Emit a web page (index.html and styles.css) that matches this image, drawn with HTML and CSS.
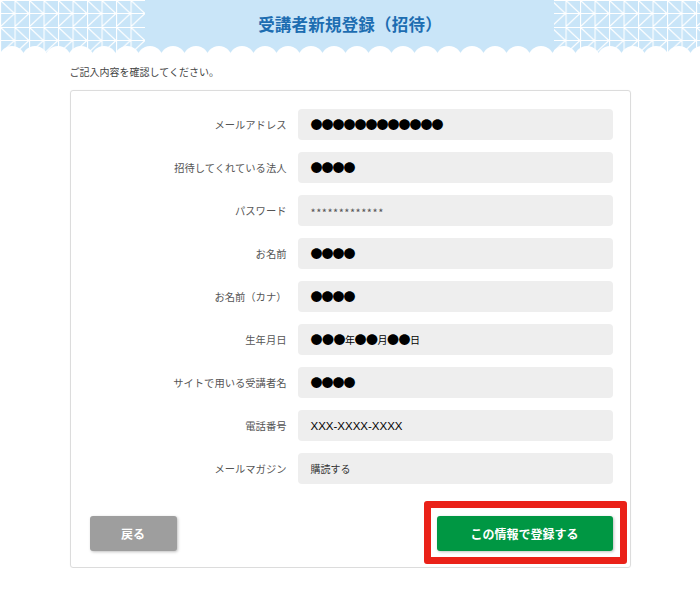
FILE: index.html
```html
<!doctype html>
<html lang="ja">
<head>
<meta charset="utf-8">
<title>受講者新規登録（招待）</title>
<link rel="stylesheet" href="styles.css">
</head>
<body>
<header class="pageHead">
	<svg class="headBg" width="700" height="56" viewBox="0 0 700 56" aria-hidden="true">
		<defs>
			<pattern id="tri" width="14.5" height="27" patternUnits="userSpaceOnUse">
				<path d="M0.5 0V27M0 0.5H14.5M0 13.5H14.5M0 0L14.5 13.5L0 27" stroke="#fff" stroke-width="1.2" fill="none"/>
			</pattern>
			<pattern id="wave" x="-11" width="23" height="56" patternUnits="userSpaceOnUse">
				<circle cx="23" cy="59" r="13" fill="#fff"/>
				<circle cx="0" cy="59" r="13" fill="#fff"/>
			</pattern>
		</defs>
		<rect width="700" height="56" fill="#c9e5f8"/>
		<rect x="0" y="0" width="145" height="56" fill="url(#tri)"/>
		<rect x="554" y="0" width="146" height="56" fill="url(#tri)"/>
		<rect width="700" height="56" fill="url(#wave)"/>
	</svg>
	<h1 class="pageTitle">受講者新規登録（招待）</h1>
</header>

<main class="content">
	<p class="lead">ご記入内容を確認してください。</p>

	<div class="card">
		<div class="row">
			<div class="label">メールアドレス</div>
			<div class="value dots">●●●●●●●●●●●●</div>
		</div>
		<div class="row">
			<div class="label">招待してくれている法人</div>
			<div class="value dots">●●●●</div>
		</div>
		<div class="row">
			<div class="label">パスワード</div>
			<div class="value pass">*************</div>
		</div>
		<div class="row">
			<div class="label">お名前</div>
			<div class="value dots">●●●●</div>
		</div>
		<div class="row">
			<div class="label">お名前（カナ）</div>
			<div class="value dots">●●●●</div>
		</div>
		<div class="row">
			<div class="label">生年月日</div>
			<div class="value birth">●●●<small>年</small>●●<small>月</small>●●<small>日</small></div>
		</div>
		<div class="row">
			<div class="label">サイトで用いる受講者名</div>
			<div class="value dots">●●●●</div>
		</div>
		<div class="row">
			<div class="label">電話番号</div>
			<div class="value tel">XXX-XXXX-XXXX</div>
		</div>
		<div class="row">
			<div class="label">メールマガジン</div>
			<div class="value plain">購読する</div>
		</div>

		<div class="actions">
			<button class="btn btnBack">戻る</button>
			<div class="mark">
				<button class="btn btnSubmit">この情報で登録する</button>
			</div>
		</div>
	</div>
</main>
</body>
</html>
```

FILE: styles.css
```css
body{
	margin: 0;
	background: #fff;
	font-family: "Noto Sans CJK JP", "Noto Sans", sans-serif;
	color: #444;
}

/* header */
.pageHead{
	position: relative;
	height: 56px;
	display: flex;
	justify-content: center;
}

.headBg{
	position: absolute;
	left: 0;
	top: 0;
}

.pageTitle{
	position: relative;
	margin: 0;
	padding-top: 11px;
	font-size: 16.5px;
	font-weight: bold;
	line-height: 26px;
	color: #1d6db1;
	letter-spacing: 0.2px;
}

/* body */
.content{
	width: 561px;
	margin: 0 auto;
}

.lead{
	margin: 8px 0 0 0;
	font-size: 10px;
	line-height: 16px;
	color: #444;
}

.card{
	margin-top: 10px;
	border: 1px solid #dcdcdc;
	border-radius: 3px;
	padding: 18px 17px 3px 18px;
	box-shadow: 0 0 1px rgba(0,0,0,0.08);
}

.row{
	display: grid;
	grid-template-columns: 198px 315px;
	column-gap: 11px;
	align-items: center;
	margin-bottom: 12px;
}

.label{
	text-align: right;
	font-size: 10.3px;
	color: #555;
}

.value{
	height: 31px;
	box-sizing: border-box;
	background: #eeeeee;
	border-radius: 4px;
	padding-left: 13px;
	display: flex;
	align-items: center;
	color: #000;
}

.dots{
	font-size: 12px;
	letter-spacing: -1px;
}

.pass{
	font-size: 11px;
	color: #555;
	letter-spacing: 0.5px;
	padding-top: 3px;
}

.birth{
	font-size: 12px;
	letter-spacing: -0.5px;
}

.birth small{
	font-size: 10px;
}

.tel{
	font-size: 11.5px;
	font-family: "Liberation Sans", "Noto Sans CJK JP", sans-serif;
}

.plain{
	font-size: 10px;
	color: #333;
}

/* margin of the last row collapses into this one */
.actions{
	display: flex;
	justify-content: space-between;
	align-items: flex-start;
	margin-top: 17px;
	padding-left: 1px;
	margin-right: -14px;
}

.btn{
	border: none;
	border-radius: 3px;
	color: #fff;
	font-family: "Noto Sans CJK JP", "Noto Sans", sans-serif;
	font-weight: bold;
	font-size: 12px;
	height: 35px;
	box-shadow: 1px 1px 3px rgba(0,0,0,0.25);
	cursor: pointer;
}

.btnBack{
	margin-top: 15px;
	width: 87px;
	background: #9e9e9e;
}

.mark{
	border: 7px solid #ea2118;
	border-radius: 3px;
	padding: 8px 7px 6px 6px;
}

.btnSubmit{
	display: block;
	width: 176px;
	background: #009743;
}
```
